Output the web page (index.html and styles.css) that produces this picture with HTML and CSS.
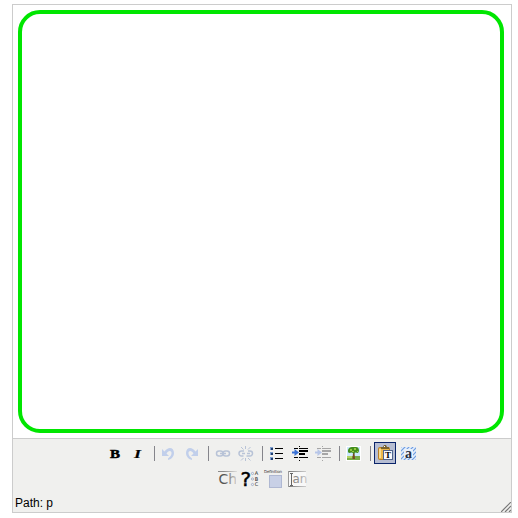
FILE: index.html
```html
<!DOCTYPE html>
<html lang="en">
<head>
<meta charset="utf-8">
<title>Editor</title>
<link rel="stylesheet" href="styles.css">
</head>
<body>
<div class="editor">
  <div class="canvas"><div class="frame"></div></div>
  <div class="controls">
    <div class="toolbar">
      <span class="btn"><svg viewBox="104 442 22 22"><text class="serif" x="110" y="458" textLength="10" lengthAdjust="spacingAndGlyphs">B</text></svg></span>
      <span class="btn"><svg viewBox="127 442 22 22"><text class="serif italic" x="134" y="458" textLength="7" lengthAdjust="spacingAndGlyphs">I</text></svg></span>
      <i class="sep"></i>
      <span class="btn"><svg viewBox="158 442 22 22"><path class="pale" d="M162 449v7h7l-2.500-2.500C168 450 172 450 171.500 453.500c-.2 2-1.500 3.500-3.500 5v1.500c4-1 6-4 6-7 0-6-6-7-9.500-1.500z"/></svg></span>
      <span class="btn"><svg viewBox="181 442 22 22"><path class="pale" d="M198 449v7h-7l2.500-2.500C192 450 188 450 188.500 453.500c.2 2 1.500 3.500 3.500 5v1.500c-4-1-6-4-6-7 0-6 6-7 9.500-1.500z"/></svg></span>
      <i class="sep"></i>
      <span class="btn"><svg viewBox="212 442 22 22"><g class="chain"><rect x="216.500" y="451" width="6.500" height="5" rx="2.500"/><rect x="223" y="451" width="6.500" height="5" rx="2.500"/><path d="M220 453.500h6"/></g></svg></span>
      <span class="btn"><svg viewBox="235 442 22 22"><g class="chain"><path d="M244 451h-2.500a2.500 2.500 0 0 0 0 5h2M242 453.500h3M248 451h2a2.500 2.500 0 0 1 0 5h-3.500M247 453.500h3"/><path class="thin" d="M245.500 446v3M241 447l2.500 2.500M250.500 447l-2.500 2.500M245.500 458v3M241 460.500l2.500-2.500M250.500 460.500l-2.500-2.500"/></g></svg></span>
      <i class="sep"></i>
      <span class="btn"><svg viewBox="266 442 22 22" shape-rendering="crispEdges"><path fill="#7c9ccd" d="M270 447h3v3h-3zM270 452h3v3h-3zM270 457h3v3h-3z"/><path fill="#21406f" d="M271 448h2v2h-2zM271 453h2v2h-2zM271 458h2v2h-2z"/><path d="M275 448h8v1h-8zM275 453h8v1h-8zM275 458h8v1h-8z"/></svg></span>
      <span class="btn"><svg viewBox="289 442 22 22"><path d="M294 448h4v1h-4zM299 446h1v1h-1zM299 448h9v1h-9zM299 450h9v2h-9zM299 453h6v2h-6zM294 457h4v1h-4zM299 457h9v1h-9zM299 460h1v1h-1z"/><path fill="#3971d5" d="M292 451.500h2.500V449l4.500 3.500-4.500 3.500v-2.500H292z"/></svg></span>
      <span class="btn"><svg viewBox="312 442 22 22"><path fill="#a6a6a6" d="M317 448h4v1h-4zM322 446h1v1h-1zM322 448h9v1h-9zM322 450h9v2h-9zM322 453h6v2h-6zM317 457h4v1h-4zM322 457h9v1h-9zM322 460h1v1h-1z"/><path fill="#b7c6e8" d="M315 451.500h2.500V449l4.500 3.500-4.500 3.500v-2.500H315z"/></svg></span>
      <i class="sep"></i>
      <span class="btn"><svg viewBox="343 442 22 22"><path fill="#fff" d="M346 446h15v15h-15z"/><path fill="#cce9fc" d="M347 447h13v9h-13z"/><path fill="#78ac48" d="M347 456h13v4h-13z"/><path fill="#b3d364" d="M347 456h5v2h-5z"/><path fill="#754a20" d="M353 453h1.500l.5 6h-2.500z"/><path fill="#438d1c" d="M348 450q1-3 4-3h4q3 0 3 4l-1 2-3-.5-1 1.500-2-1.500-3 .5-1-1z"/><path fill="#95c83e" d="M350 449h2v2h-2zM354 448h2v2h-2zM357 451h1v1h-1zM352 451h2v1h-2z"/></svg></span>
      <i class="sep"></i>
      <span class="btn active"><svg viewBox="375 443 20 20"><rect x="378.500" y="447.500" width="11" height="12" rx="1" fill="#edb84a" stroke="#b97f27"/><path fill="#f8dc92" d="M379 449h2v9h-2z"/><path fill="#78622e" d="M381 447h2l1-2h2l1 2h2v2h-8z"/><path fill="#fff" d="M384 446h1v1h-1z"/><rect x="383.500" y="450.500" width="9" height="9" fill="#f8faff" stroke="#52658d"/><text class="paste-text" x="385" y="458" textLength="6" lengthAdjust="spacingAndGlyphs">T</text></svg></span>
      <span class="btn"><svg viewBox="397 442 22 22"><defs><pattern id="hatch" width="4" height="4" patternUnits="userSpaceOnUse"><path d="M-1 1l2-2M0 4l4-4M3 5l2-2" stroke="#6e9ce0" stroke-width="1.200"/></pattern></defs><path fill="#e4eefb" d="M401 447h15v13h-15z"/><path fill="url(#hatch)" d="M401 447h15v13h-15z"/><path fill="#e8f0fb" d="M404 449h9v9h-9z"/><text class="select-all" x="405" y="458">a</text></svg></span>
    </div>
    <div class="toolbar second">
      <span class="btn"><svg viewBox="217 468 22 22"><defs><linearGradient id="fade"><stop offset=".3" stop-color="#555"/><stop offset="1" stop-color="#d4d4d4"/></linearGradient><clipPath id="cut"><path d="M218 470h18v17h-18z"/></clipPath></defs><path fill="url(#fade)" d="M218 471h19v1h-19z" opacity=".65"/><text class="abbr" x="218.500" y="484" fill="url(#fade)" clip-path="url(#cut)">Ch</text></svg></span>
      <span class="btn"><svg viewBox="240 468 22 22"><text class="question" x="240.500" y="486">?</text><g fill="none" stroke="#a3b0cb"><circle cx="252.500" cy="473.500" r="1.100"/><circle cx="252.500" cy="479" r="1.100"/><circle cx="252.500" cy="484.500" r="1.100"/></g><g class="tiny"><text x="254.800" y="475">A</text><text x="254.800" y="480.500">B</text><text x="254.800" y="486">C</text></g></svg></span>
      <span class="btn"><svg viewBox="263 468 22 22"><text class="definition" x="264" y="473" textLength="18">Definition</text><rect x="269.500" y="475.500" width="12" height="12" fill="#c8d0e6" stroke="#afb8d2"/></svg></span>
      <span class="btn"><svg viewBox="286 468 22 22"><defs><linearGradient id="edge"><stop stop-color="#777"/><stop offset="1" stop-color="#ccc"/></linearGradient></defs><path fill="#f8f8f8" d="M289 472h17v14h-17z"/><path fill="url(#edge)" d="M288 471h18v1h-18zM288 486h18v1h-18z"/><path fill="#999" d="M288 471h1v16h-1z"/><path d="M290 473.500h3M291.500 474v11M290 485.500h3" stroke="#666" fill="none"/><text class="field" x="292.500" y="483" fill="url(#edge)">an</text></svg></span>
    </div>
    <div class="status"><span>Path: p</span><svg class="grip" viewBox="0 0 10 10"><path d="M0 10L10 0M4 10l6-6M8 10l2-2" stroke="#777" stroke-width="1.200"/></svg></div>
  </div>
</div>
</body>
</html>
```

FILE: styles.css
```css
body {
  margin: 0;
  background: #fff;
}
.editor {
  box-sizing: border-box;
  width: 500px;
  height: 509px;
  margin: 4px 0 0 12px;
  border: 1px solid #ccc;
  display: flex;
  flex-direction: column;
}
.canvas {
  box-sizing: border-box;
  height: 433px;
  padding: 5px 7px 5px 5px;
}
.frame {
  box-sizing: border-box;
  height: 423px;
  border: 4px solid #00e600;
  border-radius: 22px;
}
.controls {
  flex: 1;
  display: flex;
  flex-direction: column;
  border-top: 1px solid #ccc;
  background: #f0f0ee;
}
.toolbar {
  display: flex;
  height: 22px;
  padding: 3px 0 0 91px;
}
.second {
  padding: 4px 0 0 204px;
}
.btn {
  box-sizing: border-box;
  width: 22px;
  height: 22px;
  margin-right: 1px;
}
.btn svg {
  display: block;
  width: 100%;
  height: 100%;
}
.active {
  border: 1px solid #0a246a;
  background: #b6bdd2;
}
.sep {
  width: 1px;
  height: 15px;
  margin: 4px 3px 0 4px;
  background: #85858b;
}
.serif {
  font: bold 13px "Liberation Serif", serif;
  stroke: #000;
  stroke-width: .5px;
}
.italic {
  font-style: italic;
  stroke-width: .15px;
}
.pale {
  fill: #c1cfeb;
}
.chain {
  fill: none;
  stroke: #b8c3d7;
  stroke-width: 1.5px;
}
.thin {
  stroke-width: 1px;
}
.paste-text {
  font: bold 9px "Liberation Serif", serif;
}
.select-all {
  font: bold 14px "Liberation Serif", serif;
  fill: #252e40;
}
.abbr {
  font: 14px "DejaVu Sans", sans-serif;
}
.question {
  font: 20px "DejaVu Sans", sans-serif;
  stroke: #000;
  stroke-width: .5px;
}
.tiny {
  font: 5px "DejaVu Sans", sans-serif;
  fill: #222;
}
.definition {
  font: 4px "DejaVu Sans", sans-serif;
  fill: #333;
}
.field {
  font: 12px "DejaVu Sans", sans-serif;
}
.status {
  flex: 1;
  display: flex;
  justify-content: space-between;
  align-items: flex-end;
  padding-left: 2px;
  font: 12px/18px "Liberation Sans", Arial, sans-serif;
  color: #000;
}
.grip {
  width: 10px;
  height: 10px;
}
```
